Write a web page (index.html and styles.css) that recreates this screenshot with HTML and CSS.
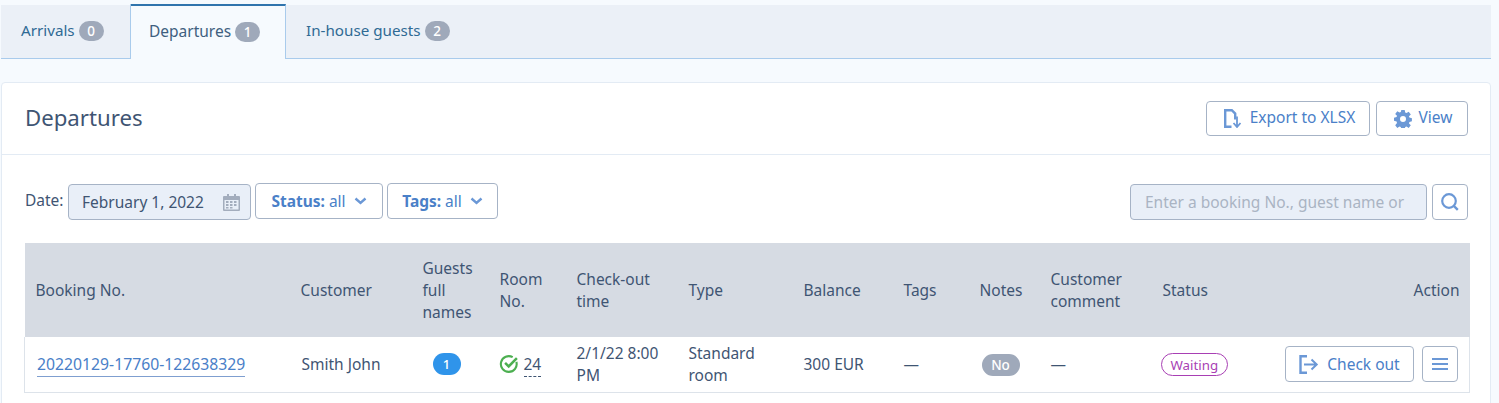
FILE: index.html
```html
<!DOCTYPE html>
<html lang="en">
<head>
<meta charset="utf-8">
<title>Departures</title>
<link rel="stylesheet" href="styles.css">
</head>
<body>
<nav class="tabs">
  <a class="tab tab-first">Arrivals <span class="count">0</span></a>
  <a class="tab tab-active">Departures <span class="count">1</span></a>
  <a class="tab">In-house guests <span class="count">2</span></a>
</nav>
<section class="card">
  <header class="card-head">
    <h1 class="title">Departures</h1>
    <div class="head-actions">
      <button class="btn btn-export">
        <svg class="ico" width="18" height="19" viewBox="0 0 18 19"><path d="M7.500 17.800H1.200V1.200h6.600l3.400 3.400v6" fill="none" stroke="#6b98d6" stroke-width="2.400"/><path d="M13 7.500v10M9.500 14l3.500 4 3.500-4" fill="none" stroke="#6b98d6" stroke-width="1.800"/></svg>
        Export to XLSX
      </button>
      <button class="btn btn-view">
        <svg class="ico" width="18" height="18" viewBox="0 0 18 18"><path fill-rule="evenodd" fill="#6b98d6" d="M7.300 0h3.400l.5 2.500 1.300.6 2.200-1.400 2.100 2.700-1.800 1.800.4 1.400 2.500.7v3l-2.500.7-.4 1.400 1.800 1.800-2.100 2.700-2.200-1.400-1.300.6-.5 2.400H7.300l-.5-2.400-1.300-.6-2.200 1.400-2.100-2.700L3 12.900l-.4-1.400L0 10.800v-3l2.600-.7.400-1.400L1.200 3.900l2.100-2.700 2.200 1.400 1.300-.6zM9 6a3 3 0 1 0 0 6 3 3 0 0 0 0-6z"/></svg>
        View
      </button>
    </div>
  </header>
  <div class="card-body">
    <div class="filters">
      <span class="date-label">Date:</span>
      <div class="date-input">
        <span>February 1, 2022</span>
        <svg width="17" height="19" viewBox="0 0 17 19"><path fill="#a3adbd" d="M1 3h3V1h2v2h5V1h2v2h3a1 1 0 0 1 1 1v13a1 1 0 0 1-1 1H1a1 1 0 0 1-1-1V4a1 1 0 0 1 1-1z"/><path fill="#e9eff8" d="M1.500 7h14v9.500h-14z"/><path fill="#a3adbd" d="M3 8h2.500v2H3zM7 8h2.500v2H7zM11 8h2.500v2H11zM3 11h2.500v2H3zM7 11h2.500v2H7zM11 11h2.500v2H11zM3 14h2.500v1.500H3zM7 14h2.500v1.500H7z"/></svg>
      </div>
      <button class="btn btn-filter btn-status"><b>Status:</b> all <svg class="chev" width="13" height="8" viewBox="0 0 13 8"><path d="M1.500 1.500l5 4.500 5-4.500" fill="none" stroke="#6b98d6" stroke-width="2.400"/></svg></button>
      <button class="btn btn-filter btn-tags"><b>Tags:</b> all <svg class="chev" width="13" height="8" viewBox="0 0 13 8"><path d="M1.500 1.500l5 4.500 5-4.500" fill="none" stroke="#6b98d6" stroke-width="2.400"/></svg></button>
      <div class="search">
        <input class="search-input" type="text" placeholder="Enter a booking No., guest name or">
        <button class="btn btn-search" aria-label="Search"><svg width="20" height="20" viewBox="0 0 20 20"><circle cx="9" cy="9" r="6.800" fill="none" stroke="#6b98d6" stroke-width="2.200"/><path d="M13.800 13.800l4 4" stroke="#6b98d6" stroke-width="2.400"/></svg></button>
      </div>
    </div>
    <table class="grid">
      <colgroup>
        <col class="c1"><col class="c2"><col class="c3"><col class="c4"><col class="c5"><col class="c6"><col class="c7"><col class="c8"><col class="c9"><col class="c10"><col class="c11"><col class="c12">
      </colgroup>
      <thead>
        <tr>
          <th>Booking No.</th><th>Customer</th><th>Guests full names</th><th>Room No.</th><th>Check-out time</th><th>Type</th><th>Balance</th><th>Tags</th><th>Notes</th><th>Customer comment</th><th>Status</th><th class="right">Action</th>
        </tr>
      </thead>
      <tbody>
        <tr>
          <td><a class="booking">20220129-17760-122638329</a></td>
          <td><span class="customer">Smith John</span></td>
          <td class="guests"><span class="pill-blue">1</span></td>
          <td><span class="room"><svg class="room-ico" width="20" height="20" viewBox="0 0 19 19"><path d="M16.500 7.500A7.500 7.500 0 1 1 13 3" fill="none" stroke="#4caf50" stroke-width="2"/><path d="M5.800 8.500l3.400 3.300L17 4" fill="none" stroke="#4caf50" stroke-width="2.400"/></svg><span class="room-no">24</span></span></td>
          <td>2/1/22 8:00 PM</td>
          <td>Standard room</td>
          <td>300 EUR</td>
          <td>—</td>
          <td><span class="pill-grey">No</span></td>
          <td>—</td>
          <td><span class="status">Waiting</span></td>
          <td class="right">
            <div class="row-actions">
              <button class="btn btn-checkout"><svg width="20" height="19" viewBox="0 0 20 19"><path d="M8 1.200H1.500v16.600H8" fill="none" stroke="#6b98d6" stroke-width="2.400"/><path d="M5 9.500h12.500M12.500 4.500l5.200 5-5.200 5" fill="none" stroke="#6b98d6" stroke-width="2"/></svg>Check out</button>
              <button class="btn btn-menu" aria-label="Menu"><svg width="16" height="12" viewBox="0 0 16 12"><path d="M0 1h16M0 6h16M0 11h16" stroke="#6b98d6" stroke-width="2"/></svg></button>
            </div>
          </td>
        </tr>
      </tbody>
    </table>
  </div>
</section>
</body>
</html>
```
FILE: styles.css
```css
* { box-sizing: border-box; }
html, body { margin: 0; height: 403px; overflow: hidden; }
body {
  background: #f6fafe;
  color: #3f5573;
  font-family: "Noto Sans", "Open Sans", sans-serif;
  font-size: 15.5px;
  line-height: 22px;
  padding: 4px 8px 0 1px;
}
.tabs {
  display: flex;
  height: 55px;
  background: linear-gradient(#f6fafe 1px, #ebf0f7 1px);
  border-bottom: 1px solid #a9cbec;
}
.tab {
  display: flex;
  align-items: center;
  gap: 4px;
  height: 54px;
  padding: 0 20px 2px 20px;
  color: #2f6a94;
  font-size: 15.2px;
  white-space: nowrap;
}
.tab-first { width: 130px; border-right: 1px solid #a9cbec; }
.tab-active {
  width: 155px;
  height: 55px;
  background: #f6fafe;
  border-top: 2px solid #2f74ad;
  border-right: 1px solid #a9cbec;
  padding: 0 18px 3px 18px;
  color: #3f5f80;
  font-size: 15.5px;
}
.count {
  display: inline-block;
  min-width: 25px;
  height: 20px;
  padding: 0 8px;
  border-radius: 10px;
  background: #9fa9ba;
  color: #fff;
  font-size: 13.5px;
  font-weight: 500;
  line-height: 20px;
  text-align: center;
  margin-top: 2px;
}
.card {
  margin-top: 23px;
  height: 330px;
  background: #fff;
  border: 1px solid #e3ebf4;
  border-radius: 4px 4px 0 0;
  overflow: hidden;
}
.card-head {
  display: flex;
  align-items: center;
  justify-content: space-between;
  height: 72px;
  padding: 0 22px 0 23px;
  border-bottom: 1px solid #e3ebf4;
}
.title {
  margin: -2px 0 0;
  font-size: 22.2px;
  font-weight: 400;
  line-height: 30px;
  color: #3f5573;
}
.head-actions { display: flex; gap: 6px; }
.btn {
  display: inline-flex;
  align-items: center;
  justify-content: center;
  height: 35px;
  padding: 0;
  background: #fff;
  border: 1px solid #a6b3c6;
  border-radius: 4px;
  color: #4a80c8;
  font: inherit;
  white-space: nowrap;
}
.btn-export { width: 164px; gap: 8px; padding: 0 0 3px 3px; }
.btn-export .ico { margin-top: 3px; }
.btn-view { width: 92px; gap: 7px; padding: 0 0 3px 2px; }
.btn-view .ico { margin-top: 3px; }
.card-body { padding: 28px 20px 0 23px; }
.filters { display: flex; align-items: center; height: 36px; }
.date-label { width: 43px; flex: none; padding-bottom: 3px; white-space: nowrap; }
.date-input {
  display: flex;
  align-items: center;
  justify-content: space-between;
  width: 183px;
  height: 36px;
  margin: 2px 4px 0 0;
  padding: 0 10px 0 13px;
  background: #e9eff8;
  border: 1px solid #a6b3c6;
  border-radius: 4px;
}
.btn-filter { height: 36px; gap: 4px; margin-right: 4px; }
.btn-status { width: 128px; }
.btn-tags { width: 111px; }
.btn-filter b { font-weight: 700; }
.btn-filter .chev { margin-left: 4px; }
.search { display: flex; gap: 5px; margin: 2px 2px 0 auto; }
.search-input {
  width: 297px;
  height: 36px;
  padding: 0 14px;
  background: #e9eff8;
  border: 1px solid #a6b3c6;
  border-radius: 4px;
  font: inherit;
  color: #3f5573;
}
.search-input::placeholder { color: #aab4c3; opacity: 1; }
.btn-search { width: 36px; height: 36px; }
.grid {
  width: 1445px;
  margin: 24px 0 0 -1px;
  border-collapse: collapse;
  table-layout: fixed;
}
.c1 { width: 265px; }
.c2 { width: 122px; }
.c3 { width: 77px; }
.c4 { width: 77px; }
.c5 { width: 112px; }
.c6 { width: 115px; }
.c7 { width: 100px; }
.c8 { width: 76px; }
.c9 { width: 71px; }
.c10 { width: 112px; }
.c11 { width: 100px; }
.c12 { width: 218px; }
.grid th {
  height: 94px;
  padding: 0 11px;
  background: #d6dbe3;
  font-weight: 400;
  text-align: left;
  color: #3f5573;
}
.grid td {
  height: 55px;
  padding: 0 11px;
  border-bottom: 1px solid #dde3ea;
}
.grid td:first-child { border-left: 1px solid #dde3ea; }
.grid td:last-child { border-right: 1px solid #dde3ea; }
.grid th.right { text-align: right; padding-right: 10px; }
.grid .right { text-align: right; }
.grid .guests { padding-left: 21px; }
.booking {
  color: #4a80c8;
  border-bottom: 1px solid #7f9fd0;
  padding-bottom: 1px;
  margin-left: 1px;
  font-size: 15.75px;
}
.customer { margin-left: 1px; }
.pill-blue {
  display: inline-block;
  width: 28px;
  height: 22px;
  margin-bottom: 2px;
  border-radius: 11px;
  background: #2f94ea;
  color: #fff;
  font-size: 13px;
  font-weight: 500;
  line-height: 22px;
  text-align: center;
  vertical-align: middle;
}
.room { display: inline-flex; align-items: center; gap: 5px; margin-left: -1px; }
.room-ico { margin-top: 2px; }
.room-no { margin-top: 4px; border-bottom: 1px dashed #3f5573; line-height: 22px; padding-bottom: 1px; }
.pill-grey {
  display: inline-block;
  width: 38px;
  height: 22px;
  margin-left: 2px;
  border-radius: 11px;
  background: #9fa9ba;
  color: #fff;
  font-size: 13.5px;
  font-weight: 500;
  line-height: 22px;
  text-align: center;
}
.status {
  display: inline-block;
  height: 23px;
  margin-left: -2px;
  padding: 0 9px;
  border: 1px solid #a83fb4;
  border-radius: 12px;
  color: #a83fb4;
  font-size: 13.3px;
  line-height: 22px;
}
.row-actions { display: flex; justify-content: flex-end; gap: 8px; }
.btn-checkout { width: 129px; height: 36px; gap: 8px; }
.btn-menu { width: 36px; height: 36px; }
```
